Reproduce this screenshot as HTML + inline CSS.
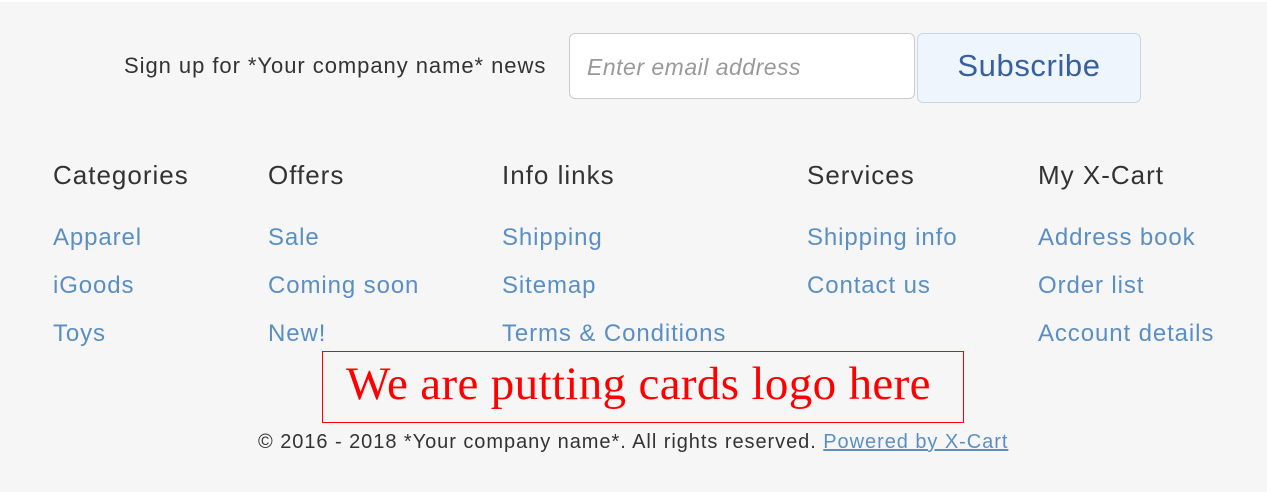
<!DOCTYPE html>
<html><head><meta charset="utf-8"><style>
body{margin:0;width:1267px;height:492px;background:#f6f6f6;font-family:"Liberation Sans",Arial,sans-serif;position:relative;overflow:hidden}
div,span,a{position:absolute;white-space:nowrap}
.h{font-size:26px;color:#333;top:160px;letter-spacing:1px}
.l{font-size:24px;color:#5b8fc4;letter-spacing:0.9px}
</style></head><body>
<div style="left:0;top:0;width:1267px;height:2px;background:#fff"></div>
<div style="left:124px;top:53px;font-size:22px;letter-spacing:0.95px;color:#333">Sign up for *Your company name* news</div>
<div style="left:569px;top:33px;width:344px;height:64px;background:#fff;border:1px solid #ccc;border-radius:6px"></div>
<div style="left:587px;top:54px;font-size:23px;font-style:italic;color:#999;letter-spacing:0.5px">Enter email address</div>
<div style="left:917px;top:33px;width:222px;height:68px;background:#eef5fd;border:1px solid #c8d8e8;border-radius:6px;box-sizing:content-box"></div>
<div style="left:917px;top:48px;width:224px;text-align:center;font-size:31px;color:#38609f;letter-spacing:0.6px">Subscribe</div>

<div class="h" style="left:53px">Categories</div>
<div class="h" style="left:268px">Offers</div>
<div class="h" style="left:502px">Info links</div>
<div class="h" style="left:807px">Services</div>
<div class="h" style="left:1038px">My X-Cart</div>

<div class="l" style="left:53px;top:224px">Apparel</div>
<div class="l" style="left:53px;top:272px">iGoods</div>
<div class="l" style="left:53px;top:320px">Toys</div>
<div class="l" style="left:268px;top:224px">Sale</div>
<div class="l" style="left:268px;top:272px">Coming soon</div>
<div class="l" style="left:268px;top:320px">New!</div>
<div class="l" style="left:502px;top:224px">Shipping</div>
<div class="l" style="left:502px;top:272px">Sitemap</div>
<div class="l" style="left:502px;top:320px">Terms &amp; Conditions</div>
<div class="l" style="left:807px;top:224px">Shipping info</div>
<div class="l" style="left:807px;top:272px">Contact us</div>
<div class="l" style="left:1038px;top:224px">Address book</div>
<div class="l" style="left:1038px;top:272px">Order list</div>
<div class="l" style="left:1038px;top:320px">Account details</div>

<div style="left:322px;top:351px;width:640px;height:70px;border:1px solid red"></div>
<div style="left:346px;top:357px;font-family:'Liberation Serif',serif;font-size:47px;letter-spacing:0.35px;color:red">We are putting cards logo here</div>
<div style="left:258px;top:431px;font-size:20px;color:#333;letter-spacing:0.95px">© 2016 - 2018 *Your company name*. All rights reserved. <span style="position:static;color:#5b8fc4;text-decoration:underline">Powered by X-Cart</span></div>
</body></html>
